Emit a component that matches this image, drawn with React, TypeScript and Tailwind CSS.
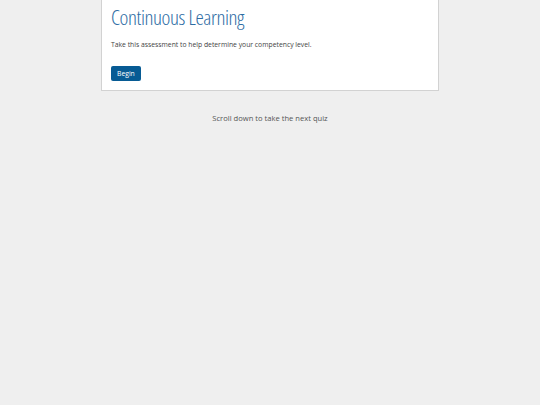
export default function App() {
  return (
    <div className="min-h-[405px] w-full bg-[#efefef] font-['Open_Sans',sans-serif]">
      <div className="mx-auto w-[338px] border border-t-0 border-[#d2d2d2] bg-white px-[9px] pb-[8px] pt-[3px]">
        <h1 className="font-['Open_Sans',sans-serif] text-[21px] font-light leading-[28px] tracking-[-0.4px] text-[#2e6da4] [font-stretch:75%]">
          Continuous Learning
        </h1>
        <p className="mt-[9px] text-[6.8px] leading-[10px] text-[#444]">
          Take this assessment to help determine your competency level.
        </p>
        <button className="mt-[16px] h-[15px] rounded-[2px] bg-[#075b94] px-[6px] text-[6.8px] leading-[15px] text-white">
          Begin
        </button>
      </div>
      <p className="mt-[21px] text-center text-[7.6px] leading-[12px] text-[#555]">
        Scroll down to take the next quiz
      </p>
    </div>
  );
}
